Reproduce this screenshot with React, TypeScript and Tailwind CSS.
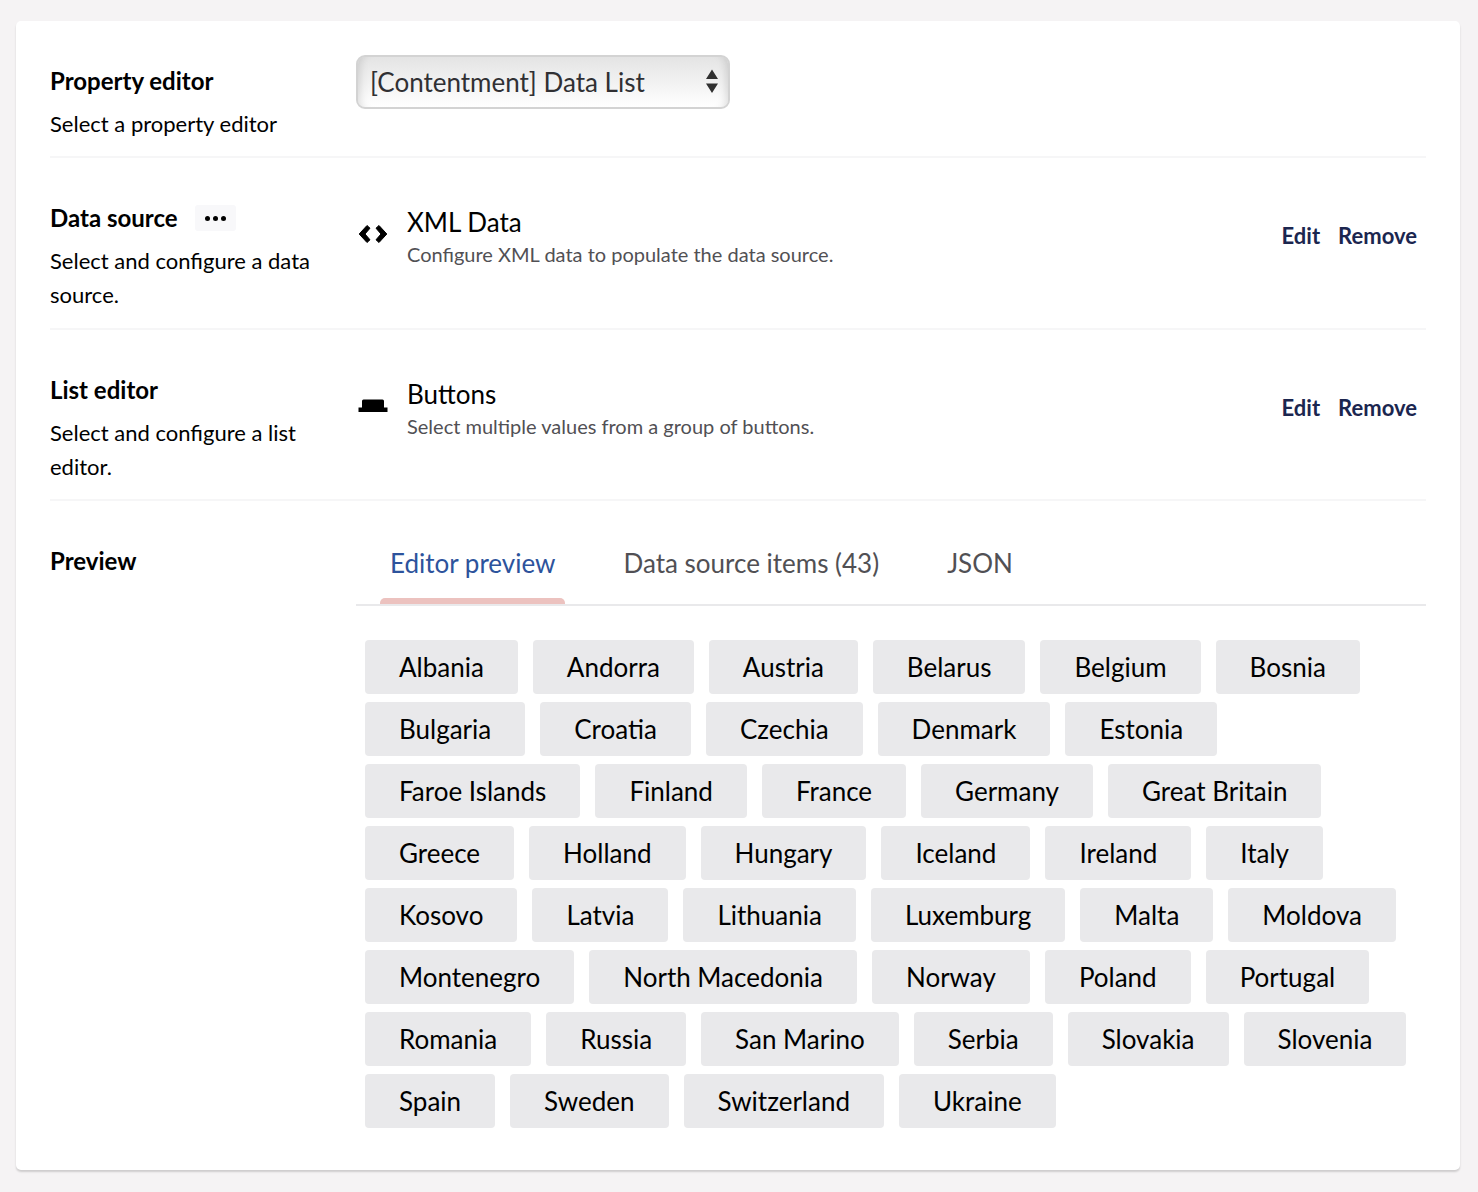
import React, { useState } from "react";

const countries: string[] = [
  "Albania", "Andorra", "Austria", "Belarus", "Belgium", "Bosnia", "Bulgaria", "Croatia", "Czechia", "Denmark", "Estonia",
  "Faroe Islands", "Finland", "France", "Germany", "Great Britain", "Greece", "Holland", "Hungary", "Iceland", "Ireland", "Italy",
  "Kosovo", "Latvia", "Lithuania", "Luxemburg", "Malta", "Moldova", "Montenegro", "North Macedonia", "Norway", "Poland", "Portugal",
  "Romania", "Russia", "San Marino", "Serbia", "Slovakia", "Slovenia", "Spain", "Sweden", "Switzerland", "Ukraine",
];

const tabs = ["Editor preview", "Data source items (43)", "JSON"];

function CodeIcon() {
  return (
    <svg width="30" height="20" viewBox="0 0 30 20" strokeWidth="1" stroke="#000" strokeLinejoin="round" aria-hidden="true">
      <path d="M9 1.500 1.200 10 9 18.500l3-2.700L7 10l5-5.800zM21 1.500l7.800 8.500L21 18.500l-3-2.700 5-5.800-5-5.800z" />
    </svg>
  );
}

function HatIcon() {
  return (
    <svg width="30" height="14" viewBox="0 0 30 14" aria-hidden="true">
      <path d="M5.500 .5h19q1.500 0 1.500 1.500v6.500h3.500v4.500h-29V8.500H4V2Q4 .5 5.500 .5z" />
    </svg>
  );
}

function Label({ title, text, more }: { title: string; text?: string; more?: boolean }) {
  return (
    <div className="w-[306px] shrink-0 pr-8">
      <div className="flex h-[34px] items-center gap-[17px]">
        <h2 className="text-[24px] font-bold">{title}</h2>
        {more && (
          <button aria-label="More actions" className="flex h-[26px] w-[41px] items-center justify-center gap-[3px] rounded-[3px] bg-[#f8f8fa]">
            <span className="size-[5px] rounded-full bg-black" />
            <span className="size-[5px] rounded-full bg-black" />
            <span className="size-[5px] rounded-full bg-black" />
          </button>
        )}
      </div>
      {text && <p className="mt-[9px]">{text}</p>}
    </div>
  );
}

function Item({ icon, name, text }: { icon: React.ReactNode; name: string; text: string }) {
  return (
    <div className="flex min-w-0 flex-1 items-start pt-1">
      <div className="mt-[12px] flex h-[34px] w-[51px] shrink-0 items-center pl-[2px]">{icon}</div>
      <div className="min-w-0 flex-1">
        <div className="text-[26px] leading-[34px]">{name}</div>
        <div className="text-[20px] leading-[30px] text-[#515054]">{text}</div>
      </div>
      <div className="mt-[14px] flex gap-[18px] pr-[9px] font-bold leading-[34px] text-[#1b264f]">
        <button>Edit</button>
        <button>Remove</button>
      </div>
    </div>
  );
}

export default function App() {
  const [tab, setTab] = useState(0);
  return (
    <main className="min-h-screen bg-[#f5f3f4] pt-[21px] pr-[18px] pb-[22px] pl-4 font-['Lato',sans-serif] text-[22px] leading-[34px] text-black">
      <div className="rounded-[5px] bg-white px-[34px] pt-[34px] pb-[42px] shadow-[0_2px_2px_rgba(0,0,0,0.16)]">
        <section className="flex border-b-2 border-[#f6f6f7] pb-[15px]">
          <div className="pt-[9px]">
            <Label title="Property editor" text="Select a property editor" />
          </div>
          <div className="relative h-[54px] w-[374px]">
            <select
              aria-label="Property editor"
              className="h-full w-full appearance-none rounded-[9px] border-2 border-[#d3d3d3] bg-linear-to-b from-[#e4e4e4] to-white px-3 text-[26px] text-[#303033] shadow-[inset_10px_0_8px_-8px_rgba(0,0,0,0.13),inset_-10px_0_8px_-8px_rgba(0,0,0,0.13)]"
            >
              <option>[Contentment] Data List</option>
            </select>
            <svg className="pointer-events-none absolute top-[14px] right-[11px]" width="14" height="24" viewBox="0 0 14 24" fill="#303030" aria-hidden="true">
              <path d="M7 .5l6 9.500H1zM7 24l6-9.500H1z" />
            </svg>
          </div>
        </section>
        <section className="flex border-b-2 border-[#f6f6f7] pt-[43px] pb-4">
          <Label title="Data source" text="Select and configure a data source." more />
          <Item icon={<CodeIcon />} name="XML Data" text="Configure XML data to populate the data source." />
        </section>
        <section className="flex border-b-2 border-[#f6f6f7] pt-[43px] pb-[15px]">
          <Label title="List editor" text="Select and configure a list editor." />
          <Item icon={<HatIcon />} name="Buttons" text="Select multiple values from a group of buttons." />
        </section>
        <section className="flex pt-[43px]">
          <Label title="Preview" />
          <div className="min-w-0 flex-1">
            <div role="tablist" className="flex gap-12 border-b-2 border-[#e9e9eb] pl-6 text-[26px]">
              {tabs.map((t, i) => (
                <button
                  key={t}
                  role="tab"
                  aria-selected={tab === i}
                  onClick={() => setTab(i)}
                  className={
                    "flex h-[60px] flex-col justify-between " + (tab === i ? "text-[#2d539c]" : "text-[#515054]")
                  }
                >
                  <span className="px-[10px] pt-[2px]">{t}</span>
                  {tab === i && <span className="h-[6px] w-full rounded-t-[5px] bg-[#ecc2bf]" />}
                </button>
              ))}
            </div>
            <div className="flex flex-wrap gap-x-[15px] gap-y-2 pt-[34px] pl-[9px]">
              {countries.map((c) => (
                <button key={c} className="h-[54px] rounded-[4px] bg-[#e9e9eb] px-[34px] text-[26px]">
                  {c}
                </button>
              ))}
            </div>
          </div>
        </section>
      </div>
    </main>
  );
}
